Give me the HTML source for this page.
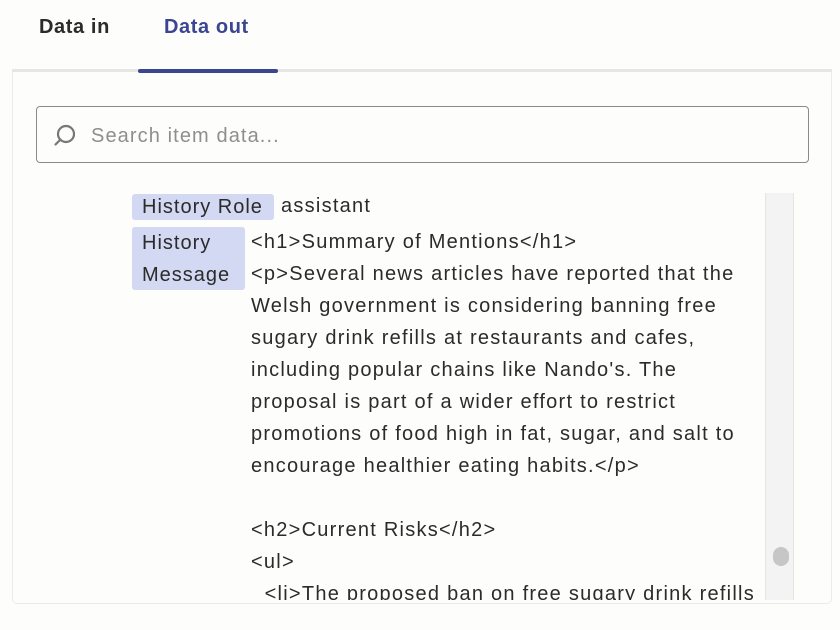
<!DOCTYPE html>
<html><head><style>
body{margin:0;width:840px;height:630px;background:#fdfdfb;font-family:"Liberation Sans",sans-serif;overflow:hidden;position:relative;color:#2b2b2b}
.tab{position:absolute;top:16px;font-size:20px;font-weight:bold;letter-spacing:0.6px}
.line{position:absolute;left:12px;top:69px;width:820px;height:3px;background:#e6e6e4}
.ul{position:absolute;left:138px;top:69px;width:140px;height:4px;background:#3b4690;border-radius:2px}
.panel{position:absolute;left:12px;top:72px;width:818px;height:531px;border:1px solid #ebebe9;border-top:none;border-radius:0 0 5px 5px;background:#fdfdfb}
.search{position:absolute;left:36px;top:106px;width:773px;height:57px;border:1px solid #8a8a8a;border-radius:4px;box-sizing:border-box}
.search span{position:absolute;left:54px;top:18px;font-size:20px;color:#8e8e8e;letter-spacing:1.1px}
.clip{position:absolute;left:13px;top:190px;width:752px;height:410px;overflow:hidden}
.lab{position:absolute;background:#d3d9f2;border-radius:3px;font-size:20px;line-height:32px;padding:0 10px;box-sizing:border-box;letter-spacing:1px}
.txt{position:absolute;font-size:20px;line-height:32px;white-space:pre;letter-spacing:1.25px}
.track{position:absolute;left:765px;top:193px;width:29px;height:407px;background:#f3f3f3;border-left:1px solid #e6e6e6;border-right:1px solid #e6e6e6;box-sizing:border-box}
.thumb{position:absolute;left:773px;top:547px;width:16px;height:19px;background:#c6c6c6;border-radius:8px}
</style></head><body>
<div class="tab" style="left:39px">Data in</div>
<div class="tab" style="left:164px;color:#3b4690">Data out</div>
<div class="panel"></div>
<div class="line"></div>
<div class="ul"></div>
<div class="search">
<svg style="position:absolute;left:15px;top:16px" width="26" height="26" viewBox="0 0 26 26"><circle cx="14" cy="11" r="8" fill="none" stroke="#777" stroke-width="2.2"/><path d="M8.5 16.5 L3.5 21.5" stroke="#777" stroke-width="2.2" stroke-linecap="round"/></svg>
<span>Search item data...</span></div>
<div class="clip">
<div class="lab" style="left:119px;top:4px;width:142px;height:26px;line-height:26px">History Role</div>
<div class="txt" style="left:268px;top:0">assistant</div>
<div class="lab" style="left:119px;top:37px;width:113px;height:63px">History<br>Message</div>
<div class="txt" style="left:238px;top:36px">&lt;h1&gt;Summary of Mentions&lt;/h1&gt;
&lt;p&gt;Several news articles have reported that the
Welsh government is considering banning free
sugary drink refills at restaurants and cafes,
including popular chains like Nando's. The
proposal is part of a wider effort to restrict
promotions of food high in fat, sugar, and salt to
encourage healthier eating habits.&lt;/p&gt;

&lt;h2&gt;Current Risks&lt;/h2&gt;
&lt;ul&gt;
  &lt;li&gt;The proposed ban on free sugary drink refills</div>
</div>
<div class="track"></div>
<div class="thumb"></div>
</body></html>
